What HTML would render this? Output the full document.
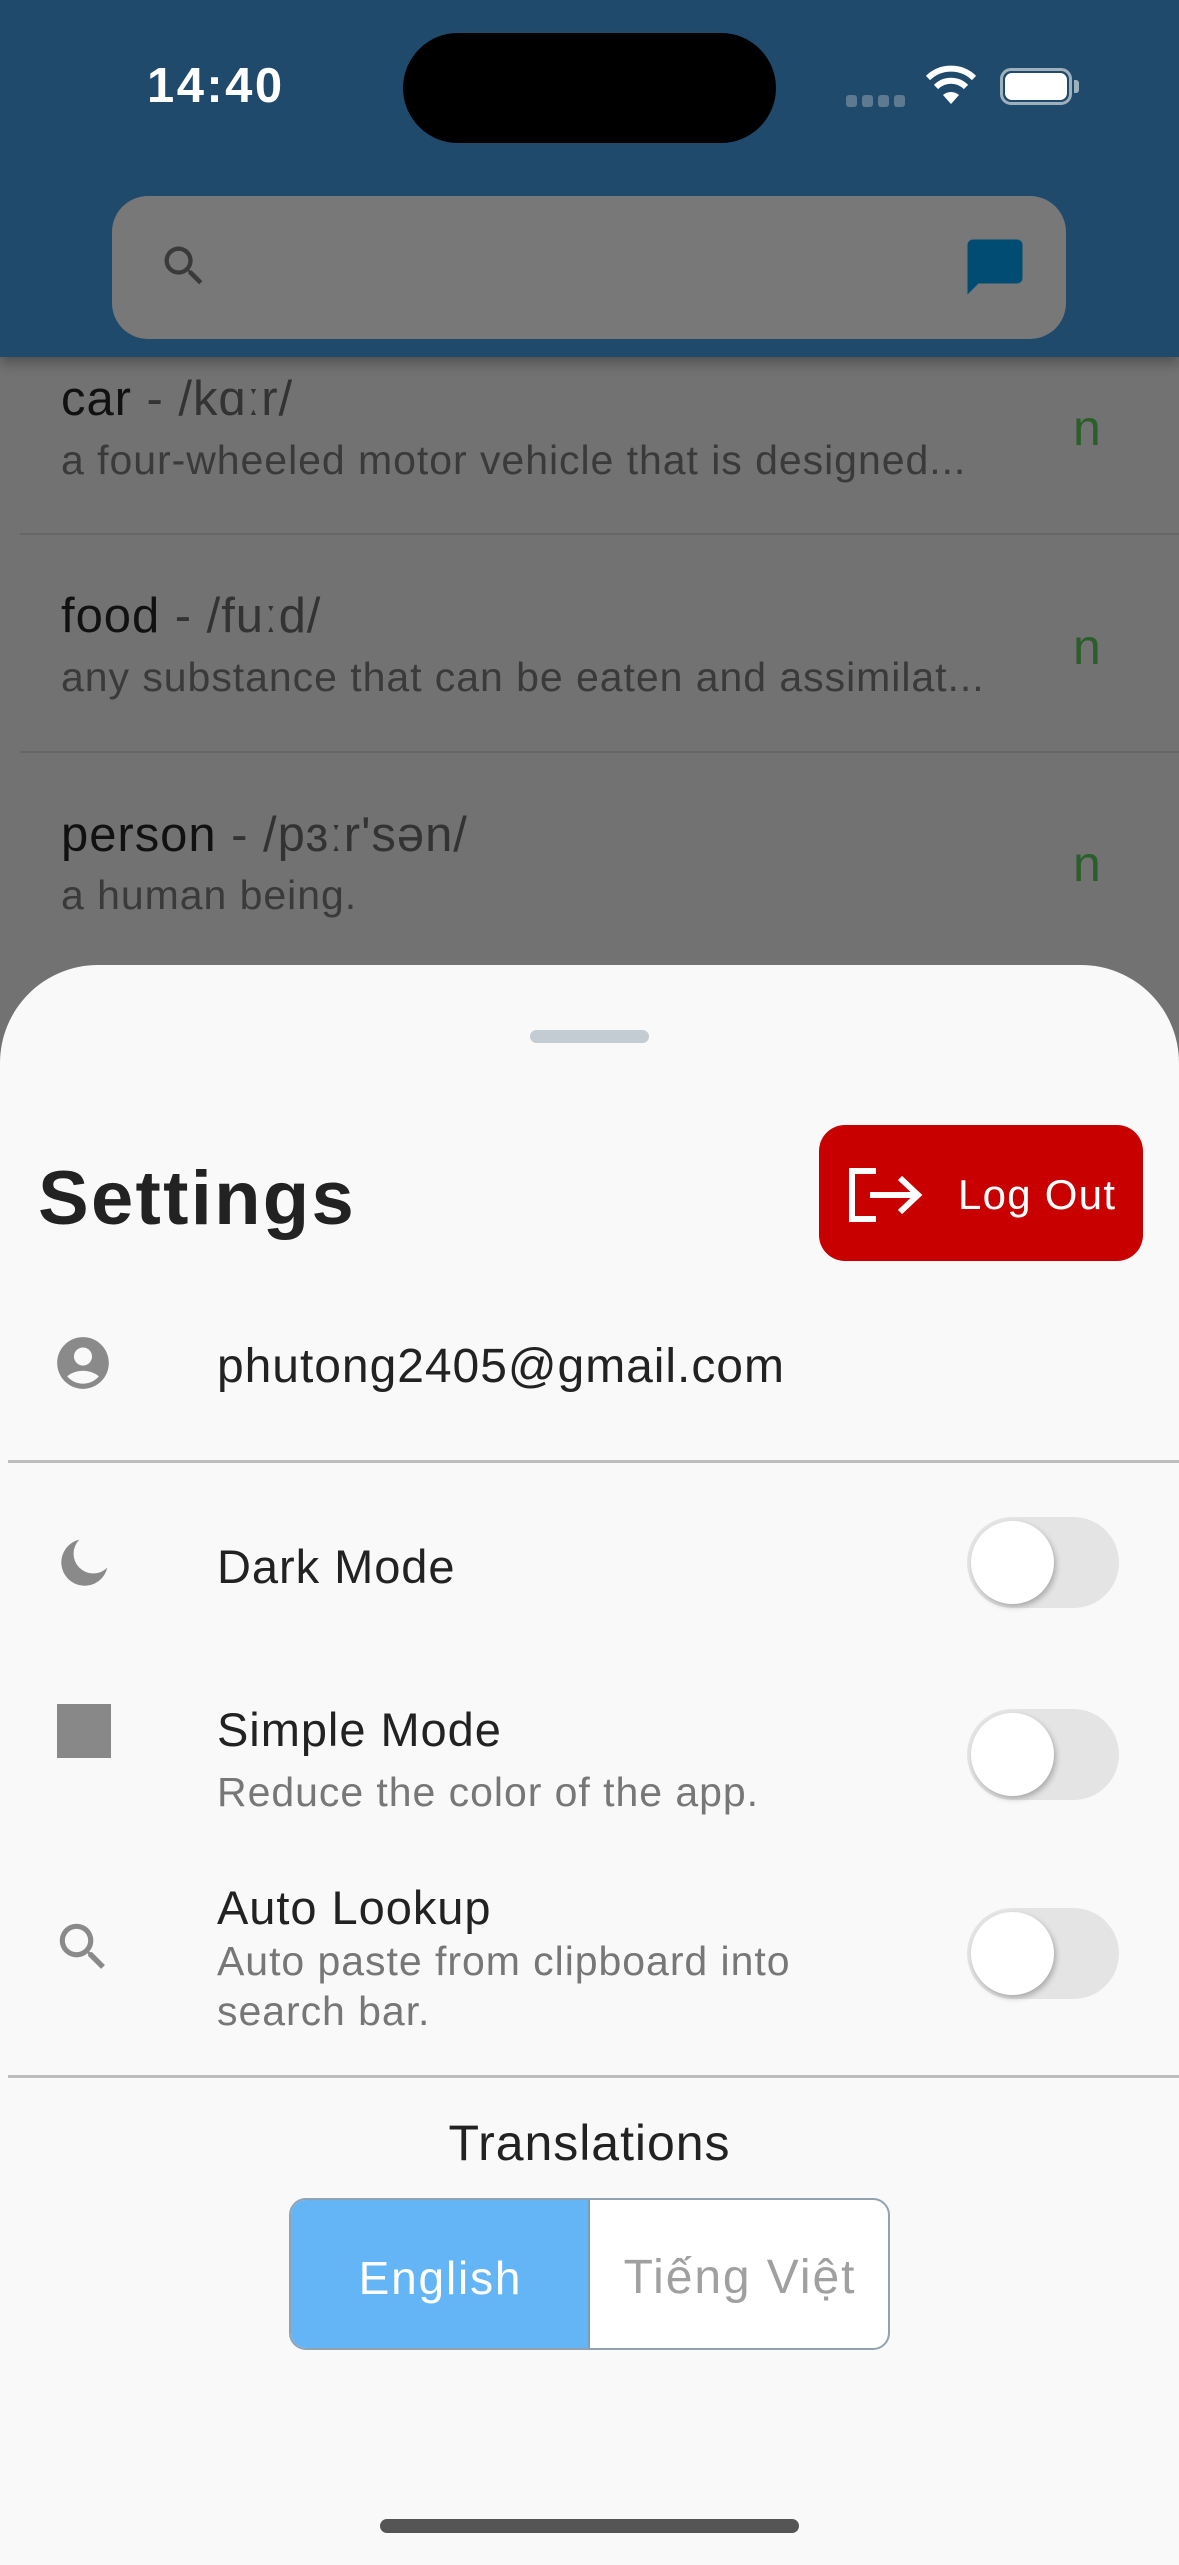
<!DOCTYPE html>
<html><head><meta charset="utf-8"><style>
*{margin:0;padding:0;box-sizing:border-box}
body{width:1179px;height:2556px;position:relative;overflow:hidden;background:#727272;font-family:"Liberation Sans","DejaVu Sans",sans-serif;letter-spacing:0.06em}
.a{position:absolute;white-space:nowrap}
.t{line-height:60px}
.tog{position:absolute;left:967px;width:152px;height:91px;border-radius:46px;background:#e4e4e4}
.tog::after{content:"";position:absolute;left:4px;top:4px;width:83px;height:83px;border-radius:50%;background:#fff;box-shadow:2px 3px 6px rgba(0,0,0,.25)}
</style></head><body>
<!-- header -->
<div class="a" style="left:0;top:0;width:1179px;height:357px;background:#1f4a6b;box-shadow:0 6px 12px rgba(0,0,0,.3)"></div>
<div class="a" style="left:147px;top:56px;font-size:49px;font-weight:bold;color:#fff;line-height:60px;letter-spacing:0.05em">14:40</div>
<div class="a" style="left:403px;top:33px;width:373px;height:110px;border-radius:55px;background:#000"></div>
<div class="a" style="left:846px;top:95px;width:60px;height:12px;display:flex;gap:5px">
<span style="width:11px;height:12px;border-radius:3px;background:#5d7a91"></span><span style="width:11px;height:12px;border-radius:3px;background:#5d7a91"></span><span style="width:11px;height:12px;border-radius:3px;background:#5d7a91"></span><span style="width:11px;height:12px;border-radius:3px;background:#5d7a91"></span></div>
<svg class="a" style="left:925px;top:64px" width="52" height="42" viewBox="0 0 52 42"><path d="M26 40 L18 31 A12 12 0 0 1 34 31 Z" fill="#fff"/><path d="M11 23 A21 21 0 0 1 41 23" stroke="#fff" stroke-width="6" fill="none"/><path d="M3 14 A33 33 0 0 1 49 14" stroke="#fff" stroke-width="6" fill="none"/></svg>
<div class="a" style="left:1000px;top:68px;width:72px;height:37px;border:3px solid #9fb0bd;border-radius:11px"></div>
<div class="a" style="left:1005px;top:73px;width:62px;height:27px;border-radius:7px;background:#fff"></div>
<div class="a" style="left:1074px;top:80px;width:5px;height:13px;border-radius:0 3px 3px 0;background:#9fb0bd"></div>
<div class="a" style="left:112px;top:196px;width:954px;height:143px;border-radius:36px;background:#787878"></div>
<svg class="a" style="left:158px;top:240px" width="52" height="52" viewBox="0 0 24 24"><path fill="#3a3a3a" d="M15.5 14h-.79l-.28-.27A6.47 6.47 0 0 0 16 9.5 6.5 6.5 0 1 0 9.5 16c1.61 0 3.09-.59 4.23-1.57l.27.28v.79l5 4.99L20.49 19l-4.99-5zm-6 0C7.01 14 5 11.99 5 9.5S7.01 5 9.5 5 14 7.01 14 9.5 11.99 14 9.5 14z"/></svg>
<svg class="a" style="left:962px;top:234px" width="66" height="66" viewBox="0 0 24 24"><path fill="#004c73" d="M20 2H4c-1.1 0-2 .9-2 2v18l4-4h14c1.1 0 2-.9 2-2V4c0-1.1-.9-2-2-2z"/></svg>
<!-- list -->
<div class="a t" style="left:61px;top:369px;font-size:49px;color:#111">car <span style="color:#333">- /kɑːr/</span></div>
<div class="a t" style="left:61px;top:430px;font-size:41px;color:#3a3a3a">a four-wheeled motor vehicle that is designed...</div>
<div class="a t" style="left:1073px;top:398px;font-size:50px;color:#2a5e2a">n</div>
<div class="a" style="left:20px;top:533px;width:1159px;height:2px;background:#666"></div>
<div class="a t" style="left:61px;top:586px;font-size:49px;color:#111">food <span style="color:#333">- /fuːd/</span></div>
<div class="a t" style="left:61px;top:647px;font-size:41px;color:#3a3a3a">any substance that can be eaten and assimilat...</div>
<div class="a t" style="left:1073px;top:617px;font-size:50px;color:#2a5e2a">n</div>
<div class="a" style="left:20px;top:751px;width:1159px;height:2px;background:#666"></div>
<div class="a t" style="left:61px;top:805px;font-size:49px;color:#111">person <span style="color:#333">- /pɜːr'sən/</span></div>
<div class="a t" style="left:61px;top:865px;font-size:41px;color:#3a3a3a">a human being.</div>
<div class="a t" style="left:1073px;top:834px;font-size:50px;color:#2a5e2a">n</div>
<!-- sheet -->
<div class="a" style="left:0;top:965px;width:1179px;height:1600px;border-radius:98px 98px 0 0;background:#f9f9f9"></div>
<div class="a" style="left:530px;top:1030px;width:119px;height:13px;border-radius:7px;background:#c3ccd2"></div>
<div class="a" style="left:38px;top:1159px;font-size:76px;font-weight:bold;color:#222;line-height:80px;letter-spacing:0.03em">Settings</div>
<div class="a" style="left:819px;top:1125px;width:324px;height:136px;border-radius:26px;background:#c80000"></div>
<svg class="a" style="left:848px;top:1168px" width="76" height="54" viewBox="0 0 76 54"><path d="M28 3 H4 V51 H28" stroke="#fff" stroke-width="6" fill="none"/><path d="M22 27 H70 M52 10 L70 27 L52 44" stroke="#fff" stroke-width="6" fill="none"/></svg>
<div class="a t" style="left:958px;top:1165px;font-size:42px;color:#fff;letter-spacing:0.03em">Log Out</div>
<svg class="a" style="left:52px;top:1332px" width="62" height="62" viewBox="0 0 24 24"><path fill="#8a8a8a" d="M12 2C6.48 2 2 6.48 2 12s4.48 10 10 10 10-4.48 10-10S17.52 2 12 2zm0 4c1.93 0 3.5 1.57 3.5 3.5S13.93 13 12 13s-3.5-1.57-3.5-3.5S10.07 6 12 6zm0 14c-2.03 0-4.43-.82-6.14-2.88a9.95 9.95 0 0 1 12.28 0C16.43 19.18 14.03 20 12 20z"/></svg>
<div class="a t" style="left:217px;top:1337px;font-size:48px;color:#222">phutong2405@gmail.com</div>
<div class="a" style="left:8px;top:1460px;width:1171px;height:3px;background:#bdbdbd"></div>
<svg class="a" style="left:56px;top:1535px" width="56" height="56" viewBox="0 0 24 24"><path fill="#8a8a8a" d="M10 2a10 10 0 1 0 12 12A7.5 7.5 0 0 1 10 2z"/></svg>
<div class="a t" style="left:217px;top:1537px;font-size:47px;color:#222">Dark Mode</div>
<div class="tog" style="top:1517px"></div>
<div class="a" style="left:57px;top:1704px;width:54px;height:54px;background:#888"></div>
<div class="a t" style="left:217px;top:1700px;font-size:47px;color:#222">Simple Mode</div>
<div class="a t" style="left:217px;top:1762px;font-size:41px;color:#777">Reduce the color of the app.</div>
<div class="tog" style="top:1709px"></div>
<svg class="a" style="left:52px;top:1916px" width="62" height="62" viewBox="0 0 24 24"><path fill="#8a8a8a" d="M15.5 14h-.79l-.28-.27A6.47 6.47 0 0 0 16 9.5 6.5 6.5 0 1 0 9.5 16c1.61 0 3.09-.59 4.23-1.57l.27.28v.79l5 4.99L20.49 19l-4.99-5zm-6 0C7.01 14 5 11.99 5 9.5S7.01 5 9.5 5 14 7.01 14 9.5 11.99 14 9.5 14z"/></svg>
<div class="a t" style="left:217px;top:1878px;font-size:47px;color:#222">Auto Lookup</div>
<div class="a t" style="left:217px;top:1931px;font-size:41px;color:#777">Auto paste from clipboard into</div>
<div class="a t" style="left:217px;top:1981px;font-size:41px;color:#777">search bar.</div>
<div class="tog" style="top:1908px"></div>
<div class="a" style="left:8px;top:2075px;width:1171px;height:3px;background:#bdbdbd"></div>
<div class="a t" style="left:0;width:1179px;text-align:center;top:2113px;font-size:50px;color:#222">Translations</div>
<div class="a" style="left:289px;top:2198px;width:601px;height:152px;border:2px solid #8fa3b3;border-radius:17px;overflow:hidden;background:#fff">
<div style="position:absolute;left:0;top:0;width:299px;height:100%;background:#64b5f6;border-right:2px solid #7a9cb8"></div>
<div style="position:absolute;left:0;top:4px;width:299px;height:100%;line-height:148px;text-align:center;font-size:46px;color:#fff;letter-spacing:0.04em">English</div>
<div style="position:absolute;left:299px;top:4px;width:300px;height:100%;line-height:148px;text-align:center;font-size:48px;color:#a0a0a0;letter-spacing:0.04em">Tiếng Việt</div>
</div>
<div class="a" style="left:380px;top:2519px;width:419px;height:14px;border-radius:7px;background:#555"></div>
</body></html>
